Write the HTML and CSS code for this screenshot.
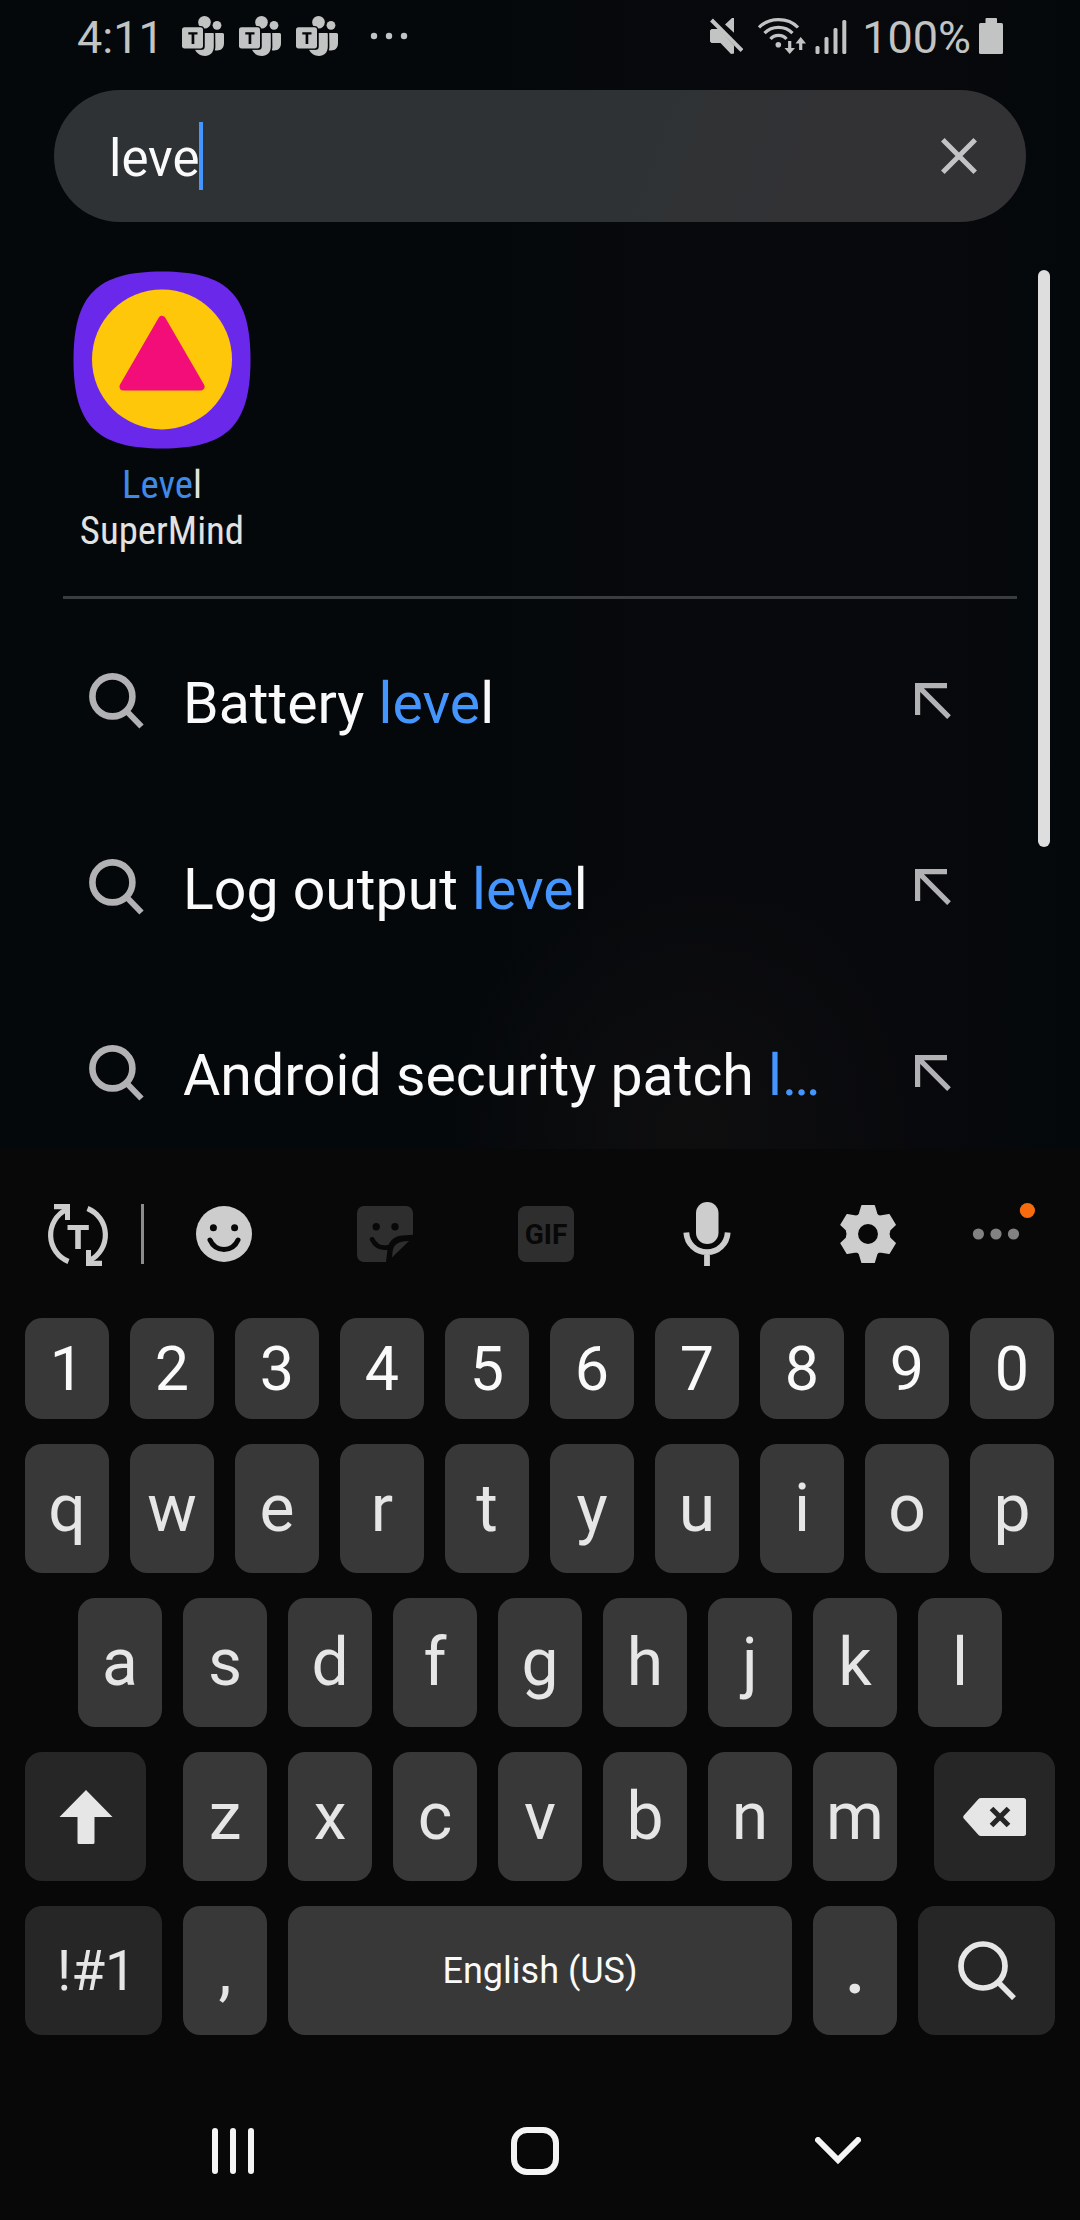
FILE: index.html
```html
<!DOCTYPE html>
<html lang="en">
<head>
<meta charset="utf-8">
<title>Search</title>
<link rel="stylesheet" href="styles.css">
</head>
<body>
<svg class="defs" width="0" height="0">
  <symbol id="teams" viewBox="0 0 42 40">
    <circle cx="22.5" cy="6.3" r="6.3"/><circle cx="35" cy="9.3" r="4.4"/>
    <path d="M13 33.8H20q2.700 0 2.700-3V17H31.200q.6 0 .6 1V30.500C31.800 36.500 28 40 23 40 18.500 40 14.800 37.500 13 33.800z"/>
    <path d="M33.200 17H40.500Q42 17 42 18.500V27C42 32.500 38.500 35.300 32.800 34.300q.6-1.800.6-3.800z"/>
    <rect x="-1.200" y="10" width="23.400" height="23.500" rx="3.500" fill="#05080b"/>
    <rect y="11.200" width="21" height="21.200" rx="2.600"/>
    <path d="M6.300 16.200h9.200v2.400h-3.200v9.400H9.600v-9.400H6.300z" fill="#05080b"/>
  </symbol>
  <symbol id="search" viewBox="0 0 55 56">
    <circle cx="23.400" cy="23.400" r="20" fill="none" stroke="#b2b2b4" stroke-width="6.600"/>
    <path d="M37.500 38 52.500 53.500" stroke="#b2b2b4" stroke-width="6"/>
  </symbol>
  <symbol id="insert" viewBox="0 0 36 36">
    <path d="M32 2.600H2.600V32M2.600 2.600 34 34.200" fill="none" stroke="#b2b2b4" stroke-width="5.200"/>
  </symbol>
</svg>

<section class="finder">
  <header class="status">
    <span class="time">4:11</span>
    <svg class="teams"><use href="#teams"/></svg>
    <svg class="teams"><use href="#teams"/></svg>
    <svg class="teams"><use href="#teams"/></svg>
    <svg class="more" width="38" height="8" viewBox="0 0 38 8"><circle cx="4" cy="4" r="3.200"/><circle cx="19" cy="4" r="3.200"/><circle cx="34" cy="4" r="3.200"/></svg>
    <span class="spacer"></span>
    <svg class="mute" width="33" height="36" viewBox="710 18 33 36">
      <path d="M710 30.500 711.500 29H719L734 45.500V53.500L731 54 720.500 43H711.500L710 41.500z"/>
      <path d="M725 24.500 732 18H734V32.800z"/>
      <path d="M711.500 20 742 50.500" stroke="#c2c4c3" stroke-width="4"/>
    </svg>
    <svg class="wifi" width="48" height="36" viewBox="758 18 48 36">
      <g fill="none" stroke="#c2c4c3" stroke-width="3.200">
        <path d="M759 27.500C769 17 788 17 798 27.500"/><path d="M764.500 33.200C772 25.500 785 25.500 792.500 33.200"/><path d="M770.500 39C774.500 34.200 782.500 34.200 786.500 39"/>
        <path d="M789.700 41V51M800.700 50V40"/>
      </g>
      <circle cx="778.300" cy="44.700" r="2.800"/>
      <path d="M784.500 48 789.700 54 795 48zM795.500 43.500 800.700 37 806 43.500z"/>
    </svg>
    <svg class="signal" width="32" height="34" viewBox="815 20 32 34"><rect x="815.500" y="46" width="4" height="8" rx="1.500"/><rect x="824.500" y="37" width="4" height="17" rx="1.500"/><rect x="833.500" y="28" width="4" height="26" rx="1.500"/><rect x="842.300" y="20" width="4" height="34" rx="1.500"/></svg>
    <span class="percent">100%</span>
    <svg class="battery" width="24" height="36" viewBox="0 0 24 36"><rect y="5" width="24" height="31" rx="1.500"/><rect x="6.500" width="11.500" height="8" rx="1"/></svg>
  </header>

  <div class="searchbar">
    <span class="query">leve</span><span class="caret"></span>
    <span class="spacer"></span>
    <svg width="36" height="36" viewBox="0 0 36 36"><path d="M1.800 1.800 34.200 34.200M34.200 1.800 1.800 34.200" stroke="#c3c3c4" stroke-width="5"/></svg>
  </div>

  <div class="results">
    <div class="app">
      <svg width="178" height="178" viewBox="-89 -89 178 178">
        <path fill="#6a28ea" d="M0-88.500C65-88.500 88.500-65 88.500 0S65 88.500 0 88.500-88.500 65-88.500 0-65-88.500 0-88.500z"/>
        <circle cx="0" cy="-.6" r="70" fill="#fec70a"/>
        <path d="M0-40 38.500 26.500H-38.500z" fill="#f20d78" stroke="#f20d78" stroke-width="8" stroke-linejoin="round"/>
      </svg>
      <span class="app-name"><b>Leve</b>l<br>SuperMind</span>
    </div>
    <ul class="suggestions">
      <li><svg class="lens"><use href="#search"/></svg><span>Battery <b>leve</b>l</span><svg class="insert"><use href="#insert"/></svg></li>
      <li><svg class="lens"><use href="#search"/></svg><span>Log output <b>leve</b>l</span><svg class="insert"><use href="#insert"/></svg></li>
      <li><svg class="lens"><use href="#search"/></svg><span>Android security patch <b>l…</b></span><svg class="insert"><use href="#insert"/></svg></li>
    </ul>
    <div class="scrollbar"></div>
  </div>
</section>

<section class="keyboard">
  <div class="toolbar">
    <svg width="1080" height="70" viewBox="0 1200 1080 70" fill="#cdcdcd">
      <g>
        <g id="half-turn"><path d="M68.500 1261.500A28.500 28.500 0 0 1 66.500 1209.500" fill="none" stroke="#cdcdcd" stroke-width="5.200"/><path d="M54 1204H70V1220H65V1209.300H54z"/></g>
        <use href="#half-turn" transform="rotate(180 78 1235)"/>
        <path d="M67.500 1225H88.800V1230H80.800V1249H75.200V1230H67.500z"/>
      </g>
      <rect x="141" y="1204" width="3" height="60" fill="#8c8c8c"/>
      <circle cx="224" cy="1234" r="28"/>
      <g fill="#080808"><circle cx="213.400" cy="1227.700" r="3.500"/><circle cx="234.600" cy="1227.700" r="3.500"/></g>
      <path d="M210 1240C215.500 1252.500 232.500 1252.500 238 1240" fill="none" stroke="#080808" stroke-width="5" stroke-linecap="round"/>
      <g fill="#2e2e2e">
        <path d="M364 1206H406A7 7 0 0 1 413 1213V1234.700L402 1235.600C393 1236.500 388 1242 387.300 1251L386 1262H364A7 7 0 0 1 357 1255V1213A7 7 0 0 1 364 1206z"/>
        <path d="M409 1241 392 1257.500 392.500 1252C393.500 1244.500 398 1241 409 1241z"/>
        <rect x="518" y="1206" width="56" height="56" rx="8"/>
      </g>
      <g fill="#080808"><circle cx="376.200" cy="1226.700" r="3.700"/><circle cx="395" cy="1226.700" r="3.700"/></g>
      <path d="M372.200 1239.500C375.500 1246 381.500 1248.500 388 1247.300" fill="none" stroke="#080808" stroke-width="4.800" stroke-linecap="round"/>
      <text x="546" y="1244" class="gif">GIF</text>
      <rect x="696" y="1202" width="22.500" height="42" rx="11.200"/>
      <path d="M686.300 1232.500C687 1244 696 1252.200 707 1252.200S727 1244 727.700 1232.500M707 1252V1266" fill="none" stroke="#cdcdcd" stroke-width="5.800"/>
      <path fill-rule="evenodd" stroke="#cdcdcd" stroke-width="1.500" stroke-linejoin="round" d="M862 1205.700H874.200L876.700 1214Q877.700 1216.200 880 1216.300L889 1214.700 895.200 1224.800 889.700 1230Q888 1234 889.700 1238L895.200 1243.200 889 1253.300 880 1251.700Q877.700 1251.800 876.700 1254L874.200 1262.300H862L859.500 1254Q858.500 1251.800 856 1251.700L847.200 1253.300 841 1243.200 846.500 1238Q848 1234 846.500 1230L841 1224.800 847.200 1214.700 856 1216.300Q858.500 1216.200 859.500 1214zM857.300 1234a10.700 10.700 0 1 0 21.400 0a10.700 10.700 0 1 0-21.400 0z"/>
      <g fill="#828282"><circle cx="978.400" cy="1234" r="5.600"/><circle cx="996" cy="1234" r="5.600"/><circle cx="1013.500" cy="1234" r="5.600"/></g>
      <circle cx="1027.400" cy="1210.500" r="7.600" fill="#f76b0f"/>
    </svg>
  </div>

  <div class="row ten digits"><kbd>1</kbd><kbd>2</kbd><kbd>3</kbd><kbd>4</kbd><kbd>5</kbd><kbd>6</kbd><kbd>7</kbd><kbd>8</kbd><kbd>9</kbd><kbd>0</kbd></div>
  <div class="row ten"><kbd>q</kbd><kbd>w</kbd><kbd>e</kbd><kbd>r</kbd><kbd>t</kbd><kbd>y</kbd><kbd>u</kbd><kbd>i</kbd><kbd>o</kbd><kbd>p</kbd></div>
  <div class="row"><kbd>a</kbd><kbd>s</kbd><kbd>d</kbd><kbd>f</kbd><kbd>g</kbd><kbd>h</kbd><kbd>j</kbd><kbd>k</kbd><kbd>l</kbd></div>
  <div class="row">
    <kbd class="dark shift"><svg width="54" height="54" viewBox="0 0 54 54"><path d="M27 0 53.500 27H35.500V52.500Q35.500 54 34 54H20Q18.500 54 18.500 52.500V27H.5z"/></svg></kbd>
    <kbd>z</kbd><kbd>x</kbd><kbd>c</kbd><kbd>v</kbd><kbd>b</kbd><kbd>n</kbd><kbd>m</kbd>
    <kbd class="dark backspace"><svg width="63" height="38" viewBox="0 0 63 38"><path d="M18 0H60.500Q63 0 63 2.500V35.500Q63 38 60.500 38H18Q16.500 38 15.500 37L.8 20.500Q-.4 19 .8 17.500L15.500 1Q16.500 0 18 0z"/><path d="M28.500 10.500 45.500 27.500M45.500 10.500 28.500 27.500" stroke="#262626" stroke-width="5.200"/></svg></kbd>
  </div>
  <div class="row">
    <kbd class="dark symbols">!#1</kbd><kbd>,</kbd><kbd class="space">English (US)</kbd><kbd class="period">.</kbd>
    <kbd class="dark enter"><svg width="58" height="59" viewBox="0 0 58 59"><circle cx="25" cy="25" r="22" fill="none" stroke="#e6e6e6" stroke-width="5.700"/><path d="M40 41 56 57.200" stroke="#e6e6e6" stroke-width="5.500"/></svg></kbd>
  </div>

  <nav>
    <svg width="42" height="46" viewBox="0 0 42 46"><rect width="6" height="46" rx="3"/><rect x="18" width="6" height="46" rx="3"/><rect x="36" width="6" height="46" rx="3"/></svg>
    <svg width="48" height="48" viewBox="0 0 48 48"><rect x="3" y="3" width="42" height="42" rx="13" fill="none" stroke="#f4f4f4" stroke-width="6"/></svg>
    <svg width="46" height="28" viewBox="0 0 46 28"><path d="M3 3 23 23 43 3" fill="none" stroke="#f4f4f4" stroke-width="6" stroke-linecap="round"/></svg>
  </nav>
</section>
</body>
</html>
```
FILE: styles.css
```css
* { box-sizing: border-box; }
body {
  margin: 0;
  width: 1080px;
  height: 2220px;
  overflow: hidden;
  background: #080808;
  font-family: Roboto, "Liberation Sans", sans-serif;
}
svg { display: block; flex: none; }
.defs { position: absolute; }
.spacer { flex: 1; }
b { font-weight: 400; color: #4595ff; }

/* search screen */
.finder {
  height: 1149px;
  overflow: hidden;
  background: radial-gradient(ellipse 240px 260px at 690px 1130px, #0e0e0f, rgba(14, 14, 15, 0)), linear-gradient(90deg, #05080b 45%, #08090c 75%, #05080b);
}
.status {
  display: flex;
  align-items: center;
  height: 72px;
  padding: 0 77px;
  color: #c2c4c3;
  fill: #c2c4c3;
  font-size: 45px;
  line-height: 54px;
}
.time { width: 105px; padding-top: 3px; }
.percent { padding-top: 3px; margin: 0 8px 0 15px; }
.teams { width: 42px; height: 40px; margin-right: 15px; }
.more { margin-left: 17px; }
.mute { margin-right: 15px; }
.wifi { margin-right: 9px; }
.signal { margin-top: 2px; }

.searchbar {
  display: flex;
  align-items: center;
  width: 972px;
  height: 132px;
  margin: 18px 0 0 54px;
  padding: 0 49px 0 55px;
  border-radius: 66px;
  background: linear-gradient(110deg, #2e3234 55%, #323235 75%);
  color: #fafafa;
  font-size: 51px;
}
.query { width: 90px; padding-top: 5px; }
.caret { width: 4px; height: 68px; background: #4595ff; }

.results { position: relative; height: 927px; padding: 49px 63px 0; }
.app {
  display: flex;
  flex-direction: column;
  align-items: center;
  width: 198px;
  height: 325px;
}
.app-name {
  margin-top: 13px;
  color: #e2e2e2;
  font-family: "Roboto Condensed", Roboto, sans-serif;
  font-stretch: 75%;
  font-size: 38.800px;
  line-height: 46px;
  text-align: center;
}
.app-name b { color: #3f8ae8; }
.suggestions {
  margin: 0;
  padding: 12px 0 0;
  border-top: 3px solid #3a3d40;
  list-style: none;
}
.suggestions li {
  display: flex;
  align-items: center;
  height: 186px;
  padding: 0 66px 0 26px;
  color: #fafafa;
  font-size: 57.200px;
  line-height: 70px;
}
.suggestions span { flex: 1; white-space: nowrap; }
.lens { width: 55px; height: 56px; margin: -6px 39px 0 0; }
.insert { width: 36px; height: 36px; margin-top: -6px; }
.scrollbar {
  position: absolute;
  left: 1038px;
  top: 48px;
  width: 12px;
  height: 577px;
  border-radius: 6px;
  background: #dedede;
}

/* keyboard */
.keyboard { height: 1071px; }
.toolbar { height: 169px; padding-top: 51px; }
.gif { fill: #080808; font-size: 28px; font-weight: 700; text-anchor: middle; }
.row {
  display: flex;
  justify-content: center;
  gap: 21px;
  width: 1030px;
  height: 129px;
  margin: 0 0 25px 25px;
}
.ten { justify-content: flex-start; }
.digits { height: 101px; }
kbd {
  display: flex;
  align-items: center;
  justify-content: center;
  width: 84px;
  border-radius: 17px;
  background: #383838;
  color: #e6e6e6;
  fill: #e6e6e6;
  font: 66px/78px Roboto, "Liberation Sans", sans-serif;
}
.digits kbd { color: #fafafa; font-size: 61px; }
.dark { background: #262626; }
.shift { width: 121px; margin-right: 16px; }
.backspace { width: 121px; margin-left: 16px; }
.symbols { width: 137px; padding-left: 6px; font-size: 55px; }
.space { width: 504px; color: #fafafa; font-size: 36px; }
.period { font-weight: 700; }
.enter { width: 137px; }
nav {
  display: flex;
  align-items: center;
  justify-content: space-between;
  width: 649px;
  height: 48px;
  margin: 92px 0 0 212px;
  fill: #f4f4f4;
}
```
